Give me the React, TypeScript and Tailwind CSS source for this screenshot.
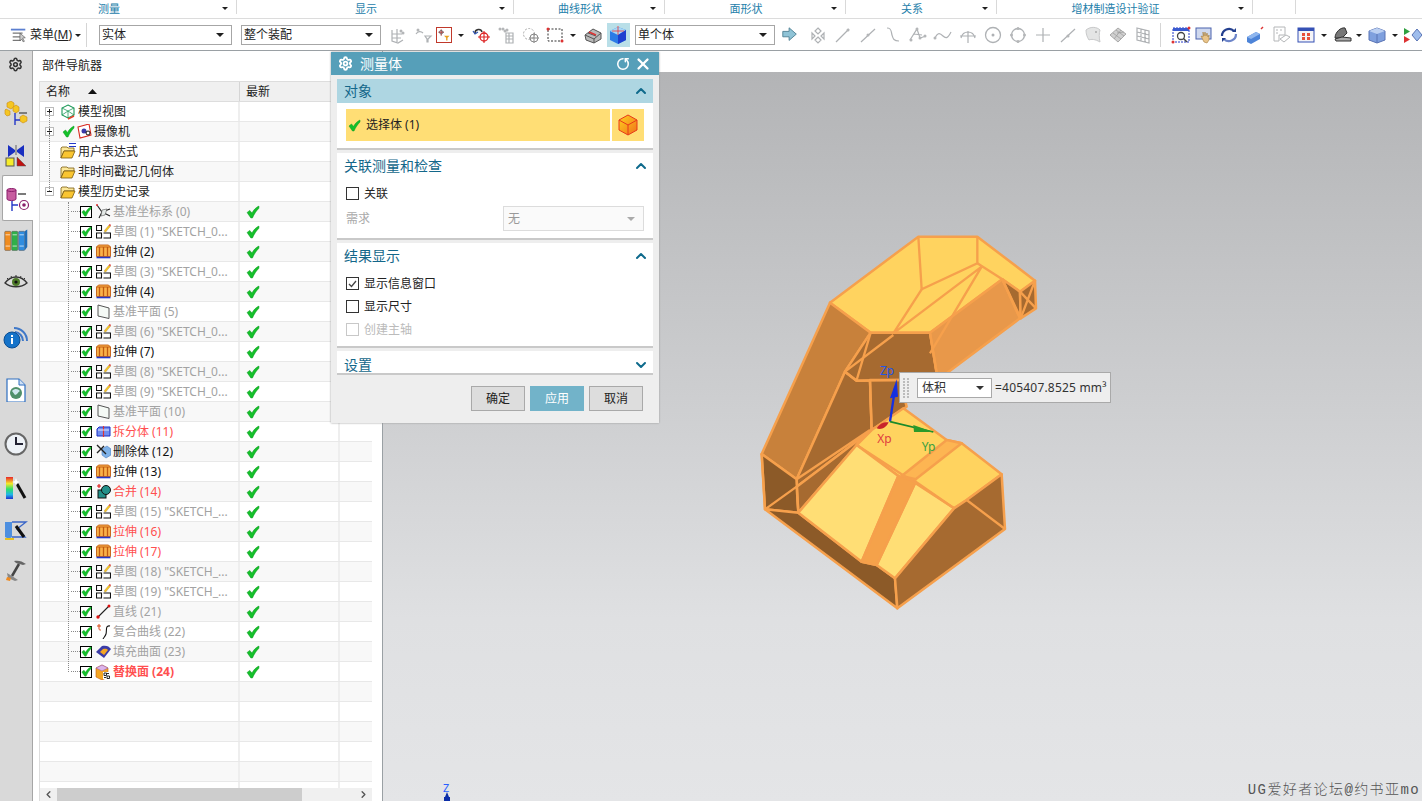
import { RotateCw, Settings, X, ChevronUp, ChevronDown, ChevronLeft, ChevronRight } from 'lucide-react';
import type { ReactNode } from 'react';

const Caret = ({ color = '#1f1f1f', small }: { color?: string; small?: boolean }) => (
  <svg width={small ? 6 : 8} height={small ? 3 : 4} viewBox="0 0 9 5" preserveAspectRatio="none" className="shrink-0">
    <path d="M0 0h9L4.500 5z" fill={color} />
  </svg>
);

const Ico = ({ size = 20, box = 20, children }: { size?: number; box?: number; children: ReactNode }) => (
  <svg width={size} height={size} viewBox={`0 0 ${box} ${box}`} fill="none" className="shrink-0">
    {children}
  </svg>
);

// gray disabled toolbar drawing
const Gray = ({ d, dots }: { d: string; dots?: [number, number][] }) => (
  <Ico>
    <path d={d} stroke="#aeb1b4" strokeWidth="1.2" />
    {dots?.map(([x, y]) => <circle key={`${x}-${y}`} cx={x} cy={y} r="1.5" fill="#b4b6b8" />)}
  </Ico>
);

const Slot = ({ w, children }: { w: number; children?: ReactNode }) => (
  <div className="flex shrink-0 items-center justify-center" style={{ width: w }}>
    {children}
  </div>
);

const Dropdown = ({ w, label }: { w: number; label: string }) => (
  <div className="flex h-[20px] shrink-0 items-center justify-between border border-[#a6a6a6] bg-white pl-[2px] pr-[7px] text-xs text-[#222]" style={{ width: w }}>
    <span>{label}</span>
    <Caret />
  </div>
);

const groups = [
  { label: '测量', w: 237, arrow: true },
  { label: '显示', w: 277, arrow: true },
  { label: '曲线形状', w: 151, arrow: true },
  { label: '面形状', w: 181, arrow: true },
  { label: '关系', w: 151, arrow: true },
  { label: '增材制造设计验证', w: 256, arrow: true },
  { label: '', w: 43, arrow: false },
  { label: '', w: 126, arrow: false },
];

function RibbonTabs() {
  return (
    <div className="flex h-[19px] shrink-0 border-b border-[#dcdcdc] bg-white">
      {groups.map((g, i) => (
        <div key={i} className="relative flex h-[18px] shrink-0 items-center justify-center text-[11px] text-[#2480aa]" style={{ width: g.w }}>
          <span className="pr-[19px]">{g.label}</span>
          {g.arrow && (
            <span className="absolute right-[9px] top-[7px] flex">
              <Caret small />
            </span>
          )}
          {i < groups.length - 1 && <span className="absolute right-0 top-0 h-[14px] w-px bg-[#d9d9d9]" />}
        </div>
      ))}
    </div>
  );
}

function Toolbar() {
  return (
    <div className="flex h-[32px] shrink-0 items-center border-b border-[#9aa0a4] bg-white pt-[1px]">
      <div className="ml-[10px] flex w-[18px] shrink-0 justify-center">
        <Ico size={18}>
          <path d="M1 4h16" stroke="#5b7fd0" strokeWidth="2" />
          <path d="M3 8h11M3 12h9M3 16h9" stroke="#777" strokeWidth="1.4" />
          <path d="M11 8l6 5-3 .5 2 3.500-1.500.5-1.500-3-2 2z" fill="#ccc" stroke="#555" strokeWidth=".7" />
        </Ico>
      </div>
      <span className="ml-[2px] w-[45px] shrink-0 whitespace-nowrap text-xs text-[#222]">
        菜单(<span className="underline">M</span>)
      </span>
      <Caret small />
      <div className="ml-[5px] mr-[12px] h-[24px] w-px shrink-0 bg-[#d5d5d5]" />
      <Dropdown w={133} label="实体" />
      <div className="w-[9px] shrink-0" />
      <Dropdown w={140} label="整个装配" />
      <div className="w-[4px] shrink-0" />
      <Slot w={25}><Gray d="M4 5v11l6 2 5-3M4 9h10M9 4v13M4 13h9" dots={[[13, 6], [15, 8]]} /></Slot>
      <Slot w={25}><Gray d="M3 9c2-3 5-3 7-1M12 11h6l-3 3v3h-1v-3z" dots={[[5, 5]]} /></Slot>
      <Slot w={18}>
        <div className="flex h-[16px] w-[16px] items-center justify-center border border-[#c0392b]">
          <Ico size={14}>
            <path d="M6 2v9M2 6h8" stroke="#b03a3a" strokeWidth="1.400" />
            <circle cx="6" cy="6" r="2.500" stroke="#555" />
            <path d="M10 11h8l-3 3v4h-2v-4z" fill="#e8a020" />
          </Ico>
        </div>
      </Slot>
      <Slot w={16}><Caret small /></Slot>
      <Slot w={26}>
        <Ico>
          <path d="M3 8c0-4 6-5 7-1" stroke="#333" strokeWidth="1.500" />
          <path d="M1 6l2 3 3-2" stroke="#2a4fb0" strokeWidth="1.200" />
          <circle cx="12" cy="12" r="4" stroke="#d22" strokeWidth="1.300" />
          <path d="M12 6v12M6 12h12" stroke="#d22" strokeWidth="1.100" />
        </Ico>
      </Slot>
      <Slot w={24}><Gray d="M9 8v10h7V8zM9 11h7M9 14h7M12 8v10" dots={[[3, 4], [6, 4], [8, 6], [10, 5]]} /></Slot>
      <Slot w={24}>
        <Ico>
          <circle cx="8" cy="9" r="5.500" stroke="#aaa" strokeDasharray="2 1.500" />
          <circle cx="13" cy="13" r="4" stroke="#888" />
          <path d="M13 8v10M8 13h10" stroke="#888" />
        </Ico>
      </Slot>
      <Slot w={23}>
        <Ico>
          <rect x="3" y="4" width="14" height="12" stroke="#333" strokeDasharray="2 1.500" />
          <circle cx="3" cy="4" r="1.500" fill="#d33" />
          <circle cx="17" cy="16" r="1.500" fill="#d33" />
        </Ico>
      </Slot>
      <Slot w={14}><Caret small /></Slot>
      <Slot w={25}>
        <Ico>
          <path d="M2 10l8-6 8 4v6l-7 4-8-3z" fill="#b9b9b9" stroke="#555" />
          <path d="M5 8l8 3M2 10l9 4v4M18 8l-7 6" stroke="#555" />
          <path d="M6 7l7 3" stroke="#d33" strokeWidth="1.500" />
        </Ico>
      </Slot>
      <Slot w={26}>
        <div className="flex h-[24px] w-[23px] items-center justify-center bg-[#b9dfe8]">
          <Ico>
            <path d="M2 6l8-4 8 3v10l-8 4-8-4z" fill="#2c7be6" />
            <path d="M2 6l8 4 8-5-8-3z" fill="#a7d7f5" />
            <path d="M10 10v9l8-4V5z" fill="#1d3fcf" />
            <path d="M10 1v9M4 6h12" stroke="#e33" strokeWidth=".8" />
          </Ico>
        </div>
      </Slot>
      <div className="w-[4px] shrink-0" />
      <Dropdown w={140} label="单个体" />
      <Slot w={30}>
        <Ico size={18}>
          <path d="M2 6h7V2l8 7-8 7v-4H2z" fill="#8fc3d6" stroke="#4d7f92" />
        </Ico>
      </Slot>
      <Slot w={25}><Gray d="M10 3l3 3-3 3-3-3zM4 8l3 3-3 3zM16 8l-3 3 3 3zM10 12l3 3-3 3-3-3z" /></Slot>
      <Slot w={25}><Gray d="M3 17L16 4" dots={[[15, 5]]} /></Slot>
      <Slot w={25}><Gray d="M3 17L17 4" dots={[[10, 10]]} /></Slot>
      <Slot w={25}><Gray d="M4 3c5 0 4 4 5 7s1 6 7 6" /></Slot>
      <Slot w={25}><Gray d="M2 15L9 4l3 9 6-2M6 9l8 1" dots={[[9, 4], [12, 13], [3, 15], [17, 11]]} /></Slot>
      <Slot w={25}><Gray d="M2 13c3-6 5-5 8-2s5 2 8-4" dots={[[2, 13]]} /></Slot>
      <Slot w={25}><Gray d="M3 13c2-8 12-8 14 0M10 6v12M2 11h16" /></Slot>
      <Slot w={25}>
        <Ico>
          <circle cx="10" cy="10" r="7.500" stroke="#aeb1b4" strokeWidth="1.300" />
          <circle cx="10" cy="10" r="1.500" fill="#aeb1b4" />
        </Ico>
      </Slot>
      <Slot w={25}>
        <Ico>
          <circle cx="10" cy="10" r="6.500" stroke="#aeb1b4" strokeWidth="1.300" />
          <circle cx="10" cy="3.500" r="1.500" fill="#b4b6b8" />
          <circle cx="10" cy="16.500" r="1.500" fill="#b4b6b8" />
          <circle cx="3.500" cy="10" r="1.500" fill="#b4b6b8" />
          <circle cx="16.500" cy="10" r="1.500" fill="#b4b6b8" />
        </Ico>
      </Slot>
      <Slot w={25}><Gray d="M10 3v14M3 10h14" /></Slot>
      <Slot w={25}><Gray d="M3 17L17 4" dots={[[10, 11]]} /></Slot>
      <Slot w={25}>
        <Ico>
          <path d="M3 5c5-4 11-3 14 0-1 3-1 8 0 12-5-3-9-3-11-2-2-3-3-6-3-10z" fill="#e4e5e5" stroke="#c8c9ca" />
          <circle cx="13" cy="7" r="1" fill="#aaa" />
        </Ico>
      </Slot>
      <Slot w={25}>
        <Ico>
          <path d="M2 10l8-7 8 6-8 8z" fill="#d0d0d0" stroke="#aaa" />
          <path d="M5 8l8 6M8 5l8 6M13 5l-7 9M9 8l7-1" stroke="#999" strokeWidth=".7" />
        </Ico>
      </Slot>
      <Slot w={25}><Gray d="M4 3l12 3v12L4 15zM8 4v12M12 5v12M4 7l12 3M4 11l12 3" /></Slot>
      <div className="ml-[5px] h-[24px] w-px shrink-0 bg-[#d5d5d5]" />
      <div className="w-[8px] shrink-0" />
      <Slot w={24}>
        <Ico>
          <rect x="2" y="3" width="16" height="14" stroke="#2438c8" strokeDasharray="2 1" />
          <path d="M2 3h16v3H2z" fill="#3a5ad0" />
          <circle cx="10" cy="11" r="3.500" stroke="#444" strokeWidth="1.300" />
          <path d="M12.500 13.500L16 17" stroke="#444" strokeWidth="1.500" />
          <circle cx="18" cy="3" r="1.500" fill="#d33" />
          <circle cx="2" cy="17" r="1.500" fill="#d33" />
        </Ico>
      </Slot>
      <Slot w={24}>
        <Ico>
          <rect x="1" y="3" width="15" height="11" fill="#cfd8ee" stroke="#4a62ad" />
          <path d="M9 17l-3-6 2 1V7l1 4 1-4 1 4 1-3 1 4 1-2v5l-2 3z" fill="#e9c48a" stroke="#a57c3a" strokeWidth=".6" />
        </Ico>
      </Slot>
      <Slot w={24}>
        <Ico>
          <path d="M3 11a7 7 0 0 1 12-5" stroke="#24408f" strokeWidth="2.200" />
          <path d="M17 9a7 7 0 0 1-12 5" stroke="#6d85c9" strokeWidth="2.200" />
          <path d="M13 7l4 0 0-4zM7 13l-4 0 0 4z" fill="#24408f" />
        </Ico>
      </Slot>
      <Slot w={28}>
        <Ico>
          <path d="M2 12l9-5 4 2v5l-9 5-4-2z" fill="#4d84d8" />
          <path d="M2 12l4 2 9-5-4-2z" fill="#8fb6ee" />
          <path d="M16 4l2-2" stroke="#d33" strokeWidth="1.500" />
        </Ico>
      </Slot>
      <Slot w={24}>
        <Ico>
          <path d="M3 2h11v8H8v6H3z" stroke="#b4b6b8" />
          <path d="M9 14l6-4 4 2-6 5z" stroke="#b4b6b8" />
          <path d="M5 5h2M9 5h2M5 8h2" stroke="#b4b6b8" />
        </Ico>
      </Slot>
      <Slot w={26}>
        <Ico>
          <rect x="2" y="3" width="16" height="14" fill="#f4f4f8" stroke="#3551b5" />
          <path d="M2 3h16v3H2z" fill="#3551b5" />
          <path d="M6 8h3v3H6zM11 8h3v3h-3zM6 12h3v3H6zM11 12h3v3h-3z" fill="#e8503a" />
        </Ico>
      </Slot>
      <Slot w={10}><Caret small /></Slot>
      <Slot w={27}>
        <Ico>
          <path d="M2 13c0-6 6-11 10-10l2 5-5 5z" fill="#777" stroke="#333" />
          <path d="M2 14l7-2 9 1v3H3z" fill="#aaa" stroke="#333" />
        </Ico>
      </Slot>
      <Slot w={6}><Caret small /></Slot>
      <Slot w={30}>
        <Ico>
          <path d="M2 6l8-3 8 3v9l-8 3-8-3z" fill="#7fa0de" stroke="#5a74b5" />
          <path d="M2 6l8 3 8-3-8-3z" fill="#bcd0f2" />
          <path d="M10 9v9" stroke="#5a74b5" />
        </Ico>
      </Slot>
      <Slot w={6}><Caret small /></Slot>
      <Slot w={30}>
        <Ico>
          <path d="M1 3v7l6-3.500z" fill="#30a040" />
          <path d="M1 18v-7l6 3.500z" fill="#d33" />
          <path d="M9 10l5-6 5 6-5 6z" fill="#9fbdec" stroke="#5a74b5" />
        </Ico>
      </Slot>
    </div>
  );
}

const Book = ({ fill, x }: { fill: string; x: number }) => (
  <g>
    <rect x={x} y="5" width="7" height="22" rx="1" fill={fill} stroke="#555" strokeWidth=".6" />
    <path d={`M${x + 1} 9h5M${x + 1} 22h5`} stroke="#fff" strokeWidth=".8" />
  </g>
);

function SideTabs() {
  return (
    <div className="relative flex w-[33px] shrink-0 flex-col items-center border-r border-[#a6a6a6] bg-[#d9d9d9] pr-[2px]">
      <div className="flex h-[26px] items-center justify-center">
        <Settings size={15} strokeWidth={2.4} color="#333" />
      </div>
      <div className="flex h-[58px] items-center justify-center pl-[2px] pt-[14px]">
        <Ico size={24} box={24}>
          <path d="M3 2l4-2 3 2v4l-3 2-4-2z" fill="#f5c623" stroke="#c98a10" strokeWidth=".6" />
          <path d="M9 6l3-2 3 2v4l-3 2-3-2zM2 8l4 2v4l-3 1-2-2V9z" fill="#f5c623" stroke="#c98a10" strokeWidth=".6" />
          <path d="M16 16l3-2 4 2v4l-4 2-3-2z" fill="#f5c623" stroke="#c98a10" strokeWidth=".6" />
          <path d="M11 12v12M11 19h5" stroke="#2438c8" strokeWidth="1.400" />
          <path d="M15 12h8" stroke="#222" />
        </Ico>
      </div>
      <div className="flex h-[40px] items-center justify-center pl-[2px] pt-[2px]">
        <Ico size={22} box={22}>
          <path d="M3 0l7 5v2L3 12zM19 0l-7 5v2l7 5z" fill="#1a2fc0" />
          <path d="M11 0v10" stroke="#111" strokeWidth=".6" />
          <rect x="1" y="13" width="8" height="8" fill="#f6ec2a" stroke="#555" />
          <path d="M12 21v-9l9 9z" fill="#c1110f" stroke="#555" strokeWidth=".5" />
        </Ico>
      </div>
      <div className="ml-[2px] flex h-[46px] w-[31px] items-center justify-center self-start rounded-l-[2px] border-y border-l border-[#a6a6a6] bg-white pt-[4px]">
        <Ico size={24} box={24}>
          <path d="M1 2c0-2 9-2 9 0v9c0 2-9 2-9 0z" fill="#c75c9f" stroke="#8a1f6c" />
          <path d="M1 2c0 2 9 2 9 0" stroke="#8a1f6c" />
          <path d="M12 6h8" stroke="#222" strokeWidth="1.200" />
          <path d="M6 13v10M6 17h6" stroke="#2438c8" strokeWidth="1.400" />
          <circle cx="18" cy="17" r="4.500" stroke="#8a1f6c" strokeWidth="1.200" />
          <circle cx="18" cy="17" r="1.800" fill="#8a1f6c" />
        </Ico>
      </div>
      <div className="flex h-[38px] items-center justify-center pl-[2px]">
        <svg width="26" height="26" viewBox="0 0 28 30" fill="none">
          <Book fill="#f08c20" x={1} />
          <Book fill="#2fb04a" x={9} />
          <Book fill="#2f8de0" x={17} />
          <path d="M24 5l3-2v20l-3 4z" fill="#1f6db8" />
        </svg>
      </div>
      <div className="flex h-[46px] items-center justify-center pl-[2px]">
        <Ico size={24} box={24}>
          <path d="M1 13c6-8 16-8 22 0-6 5-16 5-22 0z" fill="#ddd" stroke="#333" strokeWidth="1.300" />
          <path d="M3 8l2 2M7 6l1 2M12 5v2M17 6l-1 2M21 8l-2 2" stroke="#333" />
          <circle cx="12" cy="12" r="4" fill="#4d7a28" />
          <circle cx="12" cy="12" r="1.600" fill="#111" />
        </Ico>
      </div>
      <div className="flex h-[64px] items-center justify-center pl-[2px]">
        <Ico size={26} box={26}>
          <path d="M11 4a13 13 0 0 1 13 13M12 8a9 9 0 0 1 8 9" stroke="#3f78c8" strokeWidth="2" />
          <circle cx="9" cy="16" r="8" fill="#1573c9" stroke="#0a4d92" />
          <path d="M8 11h2v2H8zM8 14h2v6H8z" fill="#fff" />
        </Ico>
      </div>
      <div className="flex h-[42px] items-center justify-center pl-[2px]">
        <Ico size={24} box={24}>
          <path d="M3 1h12l6 6v17H3z" fill="#fff" stroke="#2e6ec0" strokeWidth="1.200" />
          <path d="M15 1v6h6" fill="#cfe0f5" stroke="#2e6ec0" />
          <circle cx="12" cy="15" r="6" fill="#4f8f6a" />
          <path d="M8 13c3-3 6-2 8 0-2 1-3 4-5 4z" fill="#cfe6ee" />
        </Ico>
      </div>
      <div className="flex h-[66px] items-center justify-center pl-[2px]">
        <Ico size={24} box={24}>
          <circle cx="12" cy="12" r="10.500" fill="#eef2f7" stroke="#666" strokeWidth="2" />
          <path d="M12 5v7h7" stroke="#223" strokeWidth="2" />
        </Ico>
      </div>
      <div className="flex h-[22px] items-center justify-center pl-[2px]">
        <svg width="22" height="24" viewBox="0 0 22 24" fill="none" className="shrink-0">
          <defs>
            <linearGradient id="rainbow" x1="0" y1="0" x2="0" y2="1">
              <stop offset="0" stopColor="#e8252a" />
              <stop offset=".3" stopColor="#f6e82a" />
              <stop offset=".55" stopColor="#2ee06a" />
              <stop offset=".8" stopColor="#20b6e8" />
              <stop offset="1" stopColor="#2030d0" />
            </linearGradient>
          </defs>
          <rect x="1" y="1" width="7" height="22" fill="url(#rainbow)" />
          <path d="M12 8l8 14" stroke="#111" strokeWidth="3" />
          <path d="M11 2l1 3 3 1-3 1-1 3-1-3-3-1 3-1z" fill="#fff" />
        </svg>
      </div>
      <div className="flex h-[60px] items-center justify-center pl-[2px]">
        <svg width="24" height="24" viewBox="0 0 24 24" fill="none">
          <path d="M1 5h7v15l-3 2-4-2z" fill="#4d8fe0" />
          <path d="M1 22h9" stroke="#e8c020" strokeWidth="2" />
          <path d="M8 5h14l-9 7 8 8H8" stroke="#3a66c8" strokeWidth="1.400" />
          <path d="M12 9l8 11" stroke="#111" strokeWidth="3" />
        </svg>
      </div>
      <div className="flex h-[24px] items-center justify-center pl-[2px]">
        <Ico size={22} box={22}>
          <path d="M9 1c4-1 8 0 12 3l-3 1-7-2z" fill="#666" />
          <path d="M14 4L7 16" stroke="#444" strokeWidth="2.500" />
          <path d="M2 13l5 3 6 4-3 1-7-3z" fill="#888" />
          <path d="M2 17l4 1-1 3-4-1z" fill="#ef8a1f" />
        </Ico>
      </div>
    </div>
  );
}

const Check = ({ size = 14 }: { size?: number }) => (
  <svg width={size} height={size} viewBox="0 0 13 13" className="shrink-0">
    <path d="M1 7l2.500-2 2 2.500C7 4.500 9 2.500 12 1v2C9.500 5.500 7.500 8.500 6 12H4.500z" fill="#14c02a" stroke="#0c9a20" strokeWidth=".5" />
  </svg>
);

const CheckBox = () => (
  <span className="flex h-[12px] w-[12px] shrink-0 items-center justify-center border border-black bg-white">
    <Check size={11} />
  </span>
);

const IconSketch = () => (
  <Ico size={15} box={15}>
    <path d="M.5 1.500h5v5h-5zM.5 9h5v5h-5zM7.500 9h7v5h-7" fill="#fff" stroke="#111" strokeWidth="1.100" />
    <path d="M8 7l5-6 1.500 1.200-5 6z" fill="#f5c623" stroke="#a85" strokeWidth=".4" />
    <path d="M12.800 1l1-1 1.200 1-.8 1.200z" fill="#d33" />
  </Ico>
);

const IconExtrude = () => (
  <Ico size={15} box={15}>
    <path d="M.5 3l2-2h10l2 2v9.500H.5z" fill="#f9b24a" stroke="#c25a10" strokeWidth=".9" />
    <path d="M.5 3h14" stroke="#c25a10" strokeWidth=".9" />
    <path d="M3.500 3v9.500M7.500 3v9.500M11.500 3v9.500" stroke="#c25a10" strokeWidth="1.300" />
    <path d="M.5 13.500h14" stroke="#2438c8" strokeWidth="1.600" />
  </Ico>
);

const IconPlane = () => (
  <Ico size={15} box={15}>
    <path d="M2 1l11 3v10.500L2 12z" fill="#f5faf6" stroke="#555" />
  </Ico>
);

const IconCsys = () => (
  <Ico size={15} box={15}>
    <path d="M1 1l5 7 8-3M6 8l-3 6M6 8l8 4" stroke="#222" strokeWidth="1.100" />
    <path d="M6 6l5-1-2 6-4 1z" fill="#e3e8e6" stroke="#555" strokeWidth=".6" />
    <circle cx="1" cy="1" r="1" fill="#d33" />
  </Ico>
);

const IconSplit = () => (
  <Ico size={15} box={15}>
    <path d="M1 5l2-2h11v9H1z" fill="#6f8cf0" stroke="#1c2fc4" />
    <path d="M7.500 2v11" stroke="#d33" strokeWidth="1.200" />
    <path d="M2 6h11" stroke="#fff" strokeWidth=".8" />
  </Ico>
);

const IconDelete = () => (
  <Ico size={15} box={15}>
    <path d="M6 5l5-3 4 3v6l-5 3-4-3z" fill="#7fb2e8" stroke="#4c7cc0" strokeWidth=".6" />
    <path d="M1 1l9 9M8 2l-7 7" stroke="#222" strokeWidth="1.400" />
  </Ico>
);

const IconUnite = () => (
  <Ico size={15} box={15}>
    <path d="M1 2h4M3 0v4" stroke="#d11" strokeWidth="1.100" />
    <rect x="2" y="6" width="8" height="8" fill="#23908a" stroke="#111" />
    <circle cx="10" cy="6" r="4.500" fill="#23908a" stroke="#111" />
  </Ico>
);

const IconLine = () => (
  <Ico size={15} box={15}>
    <path d="M2 13L13 2" stroke="#222" strokeWidth="1.100" />
    <circle cx="2" cy="13" r="1.700" fill="#d11" />
    <circle cx="13" cy="2" r="1.500" fill="#d11" />
  </Ico>
);

const IconCurve = () => (
  <Ico size={15} box={15}>
    <path d="M1 2h4M3 0v5c0 1 1 1 2 1" stroke="#d8481a" strokeWidth="1" />
    <path d="M14 2c-5-1-3 5-4 8s-2 3-3 5" stroke="#111" strokeWidth="1.100" />
  </Ico>
);

const IconFill = () => (
  <Ico size={15} box={15}>
    <path d="M0 8l6-6c4-1 7 0 9 3l-7 9z" fill="#3c3ca8" />
    <path d="M4 8l3-3c3-.5 4 0 5 1l-4 5z" fill="#f5a623" />
  </Ico>
);

const IconReplace = () => (
  <Ico size={16} box={16}>
    <path d="M1 4l6-3 6 3v9l-6 3-6-3z" fill="#f5a623" stroke="#c25a10" strokeWidth=".6" />
    <path d="M1 4l6 3 6-3-6-3z" fill="#dcb5ea" stroke="#8a4fa8" strokeWidth=".5" />
    <path d="M8 8h7v7H8z" fill="#fff" />
    <path d="M9 9h2.500v2.500H9zM12 12h2.500v2.500H12zM9 13.500h2M12 9.500h2" stroke="#111" strokeWidth=".9" />
  </Ico>
);

type Kind = 'gray' | 'black' | 'red' | 'redBold';

const textColor: Record<Kind, string> = {
  gray: 'text-[#a3a3a3]',
  black: 'text-[#111]',
  red: 'text-[#ff4f4f]',
  redBold: 'text-[#ff4f4f] font-bold',
};

const items: { label: string; icon: ReactNode; kind: Kind }[] = [
  { label: '基准坐标系 (0)', icon: <IconCsys />, kind: 'gray' },
  { label: '草图 (1) "SKETCH_0...', icon: <IconSketch />, kind: 'gray' },
  { label: '拉伸 (2)', icon: <IconExtrude />, kind: 'black' },
  { label: '草图 (3) "SKETCH_0...', icon: <IconSketch />, kind: 'gray' },
  { label: '拉伸 (4)', icon: <IconExtrude />, kind: 'black' },
  { label: '基准平面 (5)', icon: <IconPlane />, kind: 'gray' },
  { label: '草图 (6) "SKETCH_0...', icon: <IconSketch />, kind: 'gray' },
  { label: '拉伸 (7)', icon: <IconExtrude />, kind: 'black' },
  { label: '草图 (8) "SKETCH_0...', icon: <IconSketch />, kind: 'gray' },
  { label: '草图 (9) "SKETCH_0...', icon: <IconSketch />, kind: 'gray' },
  { label: '基准平面 (10)', icon: <IconPlane />, kind: 'gray' },
  { label: '拆分体 (11)', icon: <IconSplit />, kind: 'red' },
  { label: '删除体 (12)', icon: <IconDelete />, kind: 'black' },
  { label: '拉伸 (13)', icon: <IconExtrude />, kind: 'black' },
  { label: '合并 (14)', icon: <IconUnite />, kind: 'red' },
  { label: '草图 (15) "SKETCH_...', icon: <IconSketch />, kind: 'gray' },
  { label: '拉伸 (16)', icon: <IconExtrude />, kind: 'red' },
  { label: '拉伸 (17)', icon: <IconExtrude />, kind: 'red' },
  { label: '草图 (18) "SKETCH_...', icon: <IconSketch />, kind: 'gray' },
  { label: '草图 (19) "SKETCH_...', icon: <IconSketch />, kind: 'gray' },
  { label: '直线 (21)', icon: <IconLine />, kind: 'gray' },
  { label: '复合曲线 (22)', icon: <IconCurve />, kind: 'gray' },
  { label: '填充曲面 (23)', icon: <IconFill />, kind: 'gray' },
  { label: '替换面 (24)', icon: <IconReplace />, kind: 'redBold' },
];

const Folder = () => (
  <Ico size={16} box={16}>
    <path d="M1 4l1-1h5l1 1h6v3H4L1 14z" fill="#fbe79a" stroke="#7a5a10" strokeWidth=".8" />
    <path d="M1 14l3-7h11l-3 7z" fill="#f9c531" stroke="#7a5a10" strokeWidth=".8" />
  </Ico>
);

const Toggle = ({ open }: { open?: boolean }) => (
  <span className="flex h-[9px] w-[9px] shrink-0 items-center justify-center border border-[#bbb] bg-white">
    <svg width="7" height="7" viewBox="0 0 7 7">
      <path d={open ? 'M1 3.500h5' : 'M1 3.500h5M3.500 1v5'} stroke="#222" />
    </svg>
  </span>
);

const Row = ({ odd, left, latest }: { odd: boolean; left?: ReactNode; latest?: boolean }) => (
  <div className={`flex h-[20px] shrink-0 border-b border-[#e8e8e8] ${odd ? 'bg-[#f8f8f8]' : 'bg-white'}`}>
    <div className="flex w-[200px] shrink-0 items-center overflow-hidden whitespace-nowrap border-r-2 border-[#eeeeee] text-xs">{left}</div>
    <div className="flex w-[100px] shrink-0 items-center border-r-2 border-[#eeeeee] pl-[6px]">{latest && <Check />}</div>
    <div className="flex-1" />
  </div>
);

const topRows: { label: string; icon: ReactNode; toggle?: 'open' | 'closed'; check?: boolean; latest?: boolean }[] = [
  {
    label: '模型视图',
    toggle: 'closed',
    icon: (
      <Ico size={16} box={16}>
        <path d="M8 1l6 3v7l-6 3-6-3V4z" stroke="#1f9a5a" strokeWidth="1.100" />
        <path d="M2 4l6 3 6-3M8 7v7M2 11l6-4 6 4" stroke="#1f9a5a" strokeWidth=".8" />
        <path d="M8 15l6-3" stroke="#e8402a" strokeWidth="1.500" />
      </Ico>
    ),
  },
  {
    label: '摄像机',
    toggle: 'closed',
    check: true,
    icon: (
      <Ico size={15} box={15}>
        <path d="M1 3l11-3 2 11-11 3z" fill="#fff" stroke="#d8281e" strokeWidth="1.100" />
        <circle cx="7" cy="7" r="2.500" fill="#3a3aa8" />
        <circle cx="11" cy="9" r="2" stroke="#111" />
      </Ico>
    ),
  },
  {
    label: '用户表达式',
    icon: (
      <span className="relative block h-[16px] w-[16px]">
        <Folder />
        <span className="absolute right-0 top-[-1px] h-[4px] w-[7px] border-y border-[#2438c8]" />
      </span>
    ),
  },
  { label: '非时间戳记几何体', icon: <Folder /> },
  { label: '模型历史记录', toggle: 'open', icon: <Folder /> },
];

function PartNavigator() {
  return (
    <div className="flex w-[350px] shrink-0 flex-col border-r border-[#9aa0a4] bg-white">
      <div className="flex h-[30px] shrink-0 items-center pl-[9px] text-xs text-[#222]">部件导航器</div>
      <div className="ml-[6px] mr-[10px] flex min-h-0 flex-1 flex-col border-l border-[#dddddd]">
        <div className="flex h-[21px] shrink-0 border-y border-[#dddddd] bg-[#f0f0f0] text-xs text-[#222]">
          <div className="flex w-[200px] items-center border-r border-[#d5d5d5] pl-[6px]">
            <span>名称</span>
            <svg width="10" height="5" viewBox="0 0 10 5" className="ml-[18px]">
              <path d="M0 5h9L4.500 0z" fill="#111" />
            </svg>
          </div>
          <div className="flex w-[100px] items-center border-r border-[#d5d5d5] pl-[6px]">最新</div>
          <div className="flex-1" />
        </div>
        <div className="relative flex min-h-0 flex-1 flex-col overflow-hidden">
          {topRows.map((r, i) => (
            <Row
              key={r.label}
              odd={i % 2 === 1}
              left={
                <>
                  <span className="flex w-[20px] shrink-0 justify-end pr-[6px]">{r.toggle && <Toggle open={r.toggle === 'open'} />}</span>
                  {r.check && <span className="ml-[2px] mr-px"><Check size={13} /></span>}
                  <span className="flex w-[16px] shrink-0 justify-center">{r.icon}</span>
                  <span className="ml-[2px] text-[#222]">{r.label}</span>
                </>
              }
            />
          ))}
          {items.map((it, i) => (
            <Row
              key={it.label}
              odd={(i + 5) % 2 === 1}
              latest
              left={
                <>
                  <span className="ml-[31px] h-0 w-[9px] shrink-0 border-t border-dotted border-[#888]" />
                  <CheckBox />
                  <span className="ml-[3px] flex w-[16px] shrink-0 justify-center">{it.icon}</span>
                  <span className={`ml-[2px] ${textColor[it.kind]}`}>{it.label}</span>
                </>
              }
            />
          ))}
          {Array.from({ length: 6 }, (_, i) => (
            <Row key={i} odd={(i + 29) % 2 === 1} />
          ))}
          <span className="absolute left-[9px] top-[11px] h-[78px] border-l border-dotted border-[#888]" />
          <span className="absolute left-[28px] top-[100px] h-[470px] border-l border-dotted border-[#888]" />
        </div>
        <div className="flex h-[13px] shrink-0 items-center bg-[#f0f0f0]">
          <span className="flex w-[17px] justify-center">
            <ChevronLeft size={11} strokeWidth={3} color="#555" />
          </span>
          <span className="h-full w-[245px] bg-[#cdcdcd]" />
          <span className="flex-1" />
          <span className="flex w-[17px] justify-center">
            <ChevronRight size={11} strokeWidth={3} color="#555" />
          </span>
        </div>
      </div>
    </div>
  );
}

const Section = ({ title, open = true, header, className, children }: { title: string; open?: boolean; header?: string; className: string; children?: ReactNode }) => (
  <div className={`flex flex-col border-b-2 border-[#c9c9c9] bg-white ${className}`}>
    <div className={`flex h-[24px] shrink-0 items-center justify-between pl-[7px] pr-[4px] text-sm text-[#13678a] ${header ?? ''}`}>
      <span>{title}</span>
      {open ? <ChevronUp size={16} strokeWidth={3} color="#0e6a8c" /> : <ChevronDown size={16} strokeWidth={3} color="#0e6a8c" />}
    </div>
    {children}
  </div>
);

const Option = ({ label, checked, disabled }: { label: string; checked?: boolean; disabled?: boolean }) => (
  <div className="flex h-[23px] items-center pl-[9px] text-xs">
    <span className={`flex h-[13px] w-[13px] items-center justify-center border ${disabled ? 'border-[#c8c8c8]' : 'border-[#333]'}`}>
      {checked && (
        <svg width="9" height="8" viewBox="0 0 9 8">
          <path d="M1 4l2.500 2.500L8 1" stroke="#444" strokeWidth="1.300" fill="none" />
        </svg>
      )}
    </span>
    <span className={`ml-[5px] ${disabled ? 'text-[#bbb]' : 'text-[#222]'}`}>{label}</span>
  </div>
);

function MeasureDialog() {
  return (
    <div className="absolute left-[331px] top-[52px] flex h-[371px] w-[328px] flex-col bg-[#eeeeee] shadow-[0_0_2px_#999]">
      <div className="flex h-[23px] shrink-0 items-center bg-[#569fb9] pl-[7px] pr-[7px] text-sm text-white">
        <Settings size={15} strokeWidth={3} />
        <span className="ml-[7px] flex-1">测量体</span>
        <RotateCw size={14} strokeWidth={2.6} className="-scale-x-100 rotate-[90deg]" />
        <X size={18} strokeWidth={3} className="ml-[4px]" />
      </div>
      <div className="flex flex-col gap-[3px] px-[6px] pt-[4px]">
        <Section title="对象" header="bg-[#aed6e2]" className="h-[71px]">
          <div className="mt-[6px] flex gap-[2px] pl-[9px]">
            <div className="flex h-[32px] w-[264px] items-center bg-[#ffde75] pl-[2px] text-xs text-[#222]">
              <Check size={13} />
              <span className="ml-[5px]">选择体 (1)</span>
            </div>
            <div className="flex h-[32px] w-[32px] items-center justify-center bg-[#ffde75]">
              <svg width="22" height="22" viewBox="0 0 22 22" fill="none">
                <defs>
                  <linearGradient id="cube" x1="0" y1="0" x2="1" y2="1">
                    <stop offset="0" stopColor="#ffd21f" />
                    <stop offset="1" stopColor="#f0701a" />
                  </linearGradient>
                </defs>
                <path d="M11 1l9 5v10l-9 5-9-5V6z" fill="url(#cube)" stroke="#e8381a" />
                <path d="M2 6l9 5 9-5M11 11v10" stroke="#e8381a" />
              </svg>
            </div>
          </div>
        </Section>
        <Section title="关联测量和检查" header="pt-[2px]" className="h-[87px]">
          <div className="mt-[5px]">
            <Option label="关联" />
          </div>
          <div className="mt-px flex items-center pl-[9px] text-xs text-[#aaa]">
            <span className="w-[157px]">需求</span>
            <div className="flex h-[25px] w-[141px] items-center justify-between border border-[#dcdcdc] bg-[#fafafa] pl-[4px] pr-[8px] text-[#999]">
              <span>无</span>
              <Caret color="#aaa" />
            </div>
          </div>
        </Section>
        <Section title="结果显示" header="pt-[2px]" className="h-[105px]">
          <div className="mt-[5px] flex flex-col">
            <Option label="显示信息窗口" checked />
            <Option label="显示尺寸" />
            <Option label="创建主轴" disabled />
          </div>
        </Section>
        <Section title="设置" open={false} header="pt-[4px]" className="h-[24px] overflow-hidden" />
      </div>
      <div className="mt-[11px] flex justify-end gap-[5px] pr-[16px] text-xs">
        <button className="h-[25px] w-[54px] border border-[#a9a9a9] bg-[#dddddd] text-[#222]">确定</button>
        <button className="h-[25px] w-[54px] bg-[#72b3c9] text-white">应用</button>
        <button className="h-[25px] w-[54px] border border-[#a9a9a9] bg-[#dddddd] text-[#222]">取消</button>
      </div>
    </div>
  );
}

const edge = '#f6a04c';

const faces: [string, string][] = [
  ['240,218 505,20 682,20 855,152 810,185 757,148 540,308 362,308', '#ffd35f'],
  ['240,218 362,308 285,425 140,748 35,672', '#c8813b'],
  ['285,425 320,452 360,450 365,600 140,770 140,748', '#a66a30'],
  ['362,308 540,308 560,430 450,450 320,452 285,425', '#a66a30'],
  ['540,308 757,148 810,265 590,430 560,430', '#e8984a'],
  ['757,148 810,185 812,265', '#a66a30'],
  ['810,185 855,152 858,235 812,265', '#a66a30'],
  ['360,450 450,450 470,530 365,600', '#a66a30'],
  ['35,672 140,748 145,848 45,838', '#8c5a28'],
  ['45,838 145,848 335,995 380,1005 435,1045 442,1135', '#8c5a28'],
  ['140,770 365,600 320,645 145,848', '#a66a30'],
  ['365,600 460,535 590,630 635,640 755,733 650,810 612,835 445,738 320,645', '#ffd35f'],
  ['320,645 445,738 335,995 145,848', '#ffde75'],
  ['497,755 612,835 435,1045 380,1005', '#ffde75'],
  ['445,738 497,755 380,1005 335,995', '#f5a24a'],
  ['455,738 590,630 635,640 497,748', '#fdb552'],
  ['755,733 765,897 442,1135 435,1045 612,835 650,810', '#a66a30'],
];

const lines = [
  'M505 20L515 178L682 100L682 20',
  'M515 178L430 310M682 100L757 148M695 110L430 310M695 110L540 370M430 315L285 425',
  'M362 308L320 450M540 308L560 428M320 452L450 450M360 450L365 600M285 425L320 452',
  'M140 748L360 600M140 770L45 838M35 672L45 838M140 748L145 848M650 810L765 897',
  'M320 645L612 835M757 148L810 265M810 185L858 235M812 265L855 152',
];

function Model() {
  return (
    <svg width="370" height="390" viewBox="0 0 1110 1170" fill="none" className="absolute left-[367px] top-[158px]">
      {faces.map(([points, fill]) => (
        <polygon key={points} points={points} fill={fill} stroke={edge} strokeWidth="7.5" strokeLinejoin="round" />
      ))}
      {lines.map(d => (
        <path key={d} d={d} stroke={edge} strokeWidth="7" />
      ))}
      <path d="M420 575L436 470" stroke="#1530e0" strokeWidth="7" />
      <path d="M440 448L420 505L444 500z" fill="#1530e0" />
      <path d="M420 575L550 606" stroke="#1a8a2a" strokeWidth="5" />
      <path d="M550 606L490 585L492 606z" fill="#2a9a2a" />
      <path d="M380 595C390 578 405 575 416 577C408 595 392 600 380 595z" fill="#c8242a" />
      <text x="390" y="436" fontSize="36" fill="#2255e8">Zp</text>
      <text x="382" y="640" fontSize="36" fill="#e04040">Xp</text>
      <text x="515" y="662" fontSize="36" fill="#3aa040">Yp</text>
    </svg>
  );
}

function VolumePopup() {
  return (
    <div className="absolute left-[516px] top-[300px] flex h-[31px] w-[212px] items-center border border-[#a9a9a9] bg-[#eeeeee] text-xs text-[#333]">
      <div className="ml-[3px] grid w-[6px] grid-cols-2 gap-px">
        {Array.from({ length: 14 }, (_, i) => (
          <span key={i} className="h-[2px] w-[2px] bg-[#bbb]" />
        ))}
      </div>
      <div className="ml-[8px] flex h-[20px] w-[75px] items-center justify-between border border-[#a9a9a9] bg-white pl-[4px] pr-[7px]">
        <span>体积</span>
        <Caret color="#333" />
      </div>
      <span className="ml-[3px] whitespace-nowrap tracking-[0.2px]">=405407.8525 mm³</span>
    </div>
  );
}

export default function App() {
  return (
    <div className="relative flex h-[801px] w-[1422px] flex-col overflow-hidden bg-white font-['Noto_Sans','Noto_Sans_CJK_SC',sans-serif]">
      <RibbonTabs />
      <Toolbar />
      <div className="flex min-h-0 flex-1">
        <SideTabs />
        <PartNavigator />
        <div className="flex min-w-0 flex-1 flex-col">
          <div className="h-[21px] shrink-0 bg-white" />
          <div className="relative flex-1 bg-gradient-to-b from-[#b3b4b6] via-[#dfe0e2] via-75% to-[#e4e5e7]">
            <Model />
            <VolumePopup />
            <span className="absolute left-[60px] top-[710px] text-[11px] leading-none text-[#2a5fff]">Z</span>
            <svg width="6" height="9" viewBox="0 0 6 9" className="absolute bottom-0 left-[61px]">
              <path d="M3 0l2 5h1v4H0V5h1z" fill="#0c2ea8" />
            </svg>
            <span className="absolute bottom-[4px] right-[2px] whitespace-nowrap font-['Liberation_Mono','Noto_Sans_CJK_SC',monospace] text-sm font-light leading-none tracking-[1.4px] text-[#555]">
              UG爱好者论坛@约书亚mo
            </span>
          </div>
        </div>
      </div>
      <MeasureDialog />
    </div>
  );
}
